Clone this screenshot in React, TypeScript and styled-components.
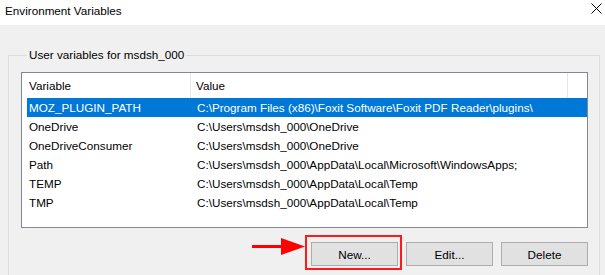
import styled, { createGlobalStyle } from "styled-components";

const GlobalStyle = createGlobalStyle`
    html, body {
        margin: 0;
        padding: 0;
        background: #f0f0f0;
        overflow: hidden;
    }
    body {
        font-family: "Liberation Sans", Arial, sans-serif;
        font-size: 11.7px;
        color: #000;
    }
`;

const Window = styled.div`
    width: 605px;
    height: 275px;
    background: #f0f0f0;
`;

const TitleBar = styled.div`
    height: 25px;
    background: #fff;
    display: flex;
    align-items: center;
    justify-content: space-between;
    padding: 0 3px 0 5px;
    box-sizing: border-box;
`;

const Title = styled.span`
    line-height: 16px;
    margin-top: -4px;
`;

const CloseIcon = styled.svg`
    width: 11px;
    height: 11px;
    margin-top: -8px;
`;

const Body = styled.div`
    padding: 22px 6px 0 8px;
`;

const Group = styled.fieldset`
    margin: 0;
    width: 592px;
    box-sizing: border-box;
    border: 1px solid #dcdcdc;
    padding: 9px 10px 40px 12px;
`;

const Legend = styled.legend`
    padding: 0 2px;
    margin-left: 6px;
    line-height: 16px;
`;

const List = styled.div`
    width: 567px;
    height: 156px;
    box-sizing: border-box;
    border: 1px solid #828790;
    background: #fff;
    padding-left: 5px;
`;

const Row = styled.div<{ $selected?: boolean }>`
    display: grid;
    grid-template-columns: 164px 377px;
    height: 19px;
    align-items: center;
    background: ${(p) => (p.$selected ? "#0078d7" : "transparent")};
    color: ${(p) => (p.$selected ? "#fff" : "#000")};
    white-space: nowrap;
`;

const HeaderRow = styled(Row)`
    height: 25px;
    margin-left: -5px;
    padding-left: 5px;
    width: 546px;
`;

const Cell = styled.div`
    padding-left: 2px;
    overflow: hidden;
`;

const HeaderCell = styled(Cell)`
    height: 25px;
    line-height: 25px;
    border-right: 1px solid #e5e5e5;
    box-sizing: border-box;
`;

const ValueCell = styled(Cell)`
    padding-left: 6px;
`;

const HeaderValue = styled(HeaderCell)`
    padding-left: 5px;
`;

const Buttons = styled.div`
    display: flex;
    justify-content: flex-end;
    gap: 8px;
    width: 567px;
    margin-top: 14px;
`;

const Button = styled.button`
    position: relative;
    width: 87px;
    height: 24px;
    background: #e1e1e1;
    border: 1px solid #adadad;
    font-family: inherit;
    font-size: 11.7px;
    color: #000;
    padding: 0;
`;

const Highlight = styled.div`
    position: absolute;
    top: -8px;
    left: -7px;
    right: -5px;
    bottom: -5px;
    border: 2px solid #ff1a1a;
    pointer-events: none;
`;

const Arrow = styled.svg`
    position: absolute;
    left: -60px;
    top: -5px;
    width: 54px;
    height: 18px;
    overflow: visible;
`;

const vars = [
    { name: "MOZ_PLUGIN_PATH", value: "C:\\Program Files (x86)\\Foxit Software\\Foxit PDF Reader\\plugins\\" },
    { name: "OneDrive", value: "C:\\Users\\msdsh_000\\OneDrive" },
    { name: "OneDriveConsumer", value: "C:\\Users\\msdsh_000\\OneDrive" },
    { name: "Path", value: "C:\\Users\\msdsh_000\\AppData\\Local\\Microsoft\\WindowsApps;" },
    { name: "TEMP", value: "C:\\Users\\msdsh_000\\AppData\\Local\\Temp" },
    { name: "TMP", value: "C:\\Users\\msdsh_000\\AppData\\Local\\Temp" },
];

export default function App() {
    return (
        <Window>
            <GlobalStyle />
            <TitleBar>
                <Title>Environment Variables</Title>
                <CloseIcon viewBox="0 0 11 11">
                    <path d="M0.5 0.5 L10.5 10.5 M10.5 0.5 L0.5 10.5" stroke="#000" strokeWidth="1" fill="none" />
                </CloseIcon>
            </TitleBar>
            <Body>
                <Group>
                    <Legend>User variables for msdsh_000</Legend>
                    <List>
                        <HeaderRow>
                            <HeaderCell>Variable</HeaderCell>
                            <HeaderValue>Value</HeaderValue>
                        </HeaderRow>
                        {vars.map((v, i) => (
                            <Row key={v.name} $selected={i === 0}>
                                <Cell>{v.name}</Cell>
                                <ValueCell>{v.value}</ValueCell>
                            </Row>
                        ))}
                    </List>
                    <Buttons>
                        <Button>
                            New...
                            <Highlight />
                            <Arrow viewBox="0 0 54 18">
                                <path d="M0 7 H30 V10 H0 Z" fill="#ff0000" />
                                <path d="M29 0 L53 8.5 L29 17 Z" fill="#ff0000" />
                            </Arrow>
                        </Button>
                        <Button>Edit...</Button>
                        <Button>Delete</Button>
                    </Buttons>
                </Group>
            </Body>
        </Window>
    );
}
